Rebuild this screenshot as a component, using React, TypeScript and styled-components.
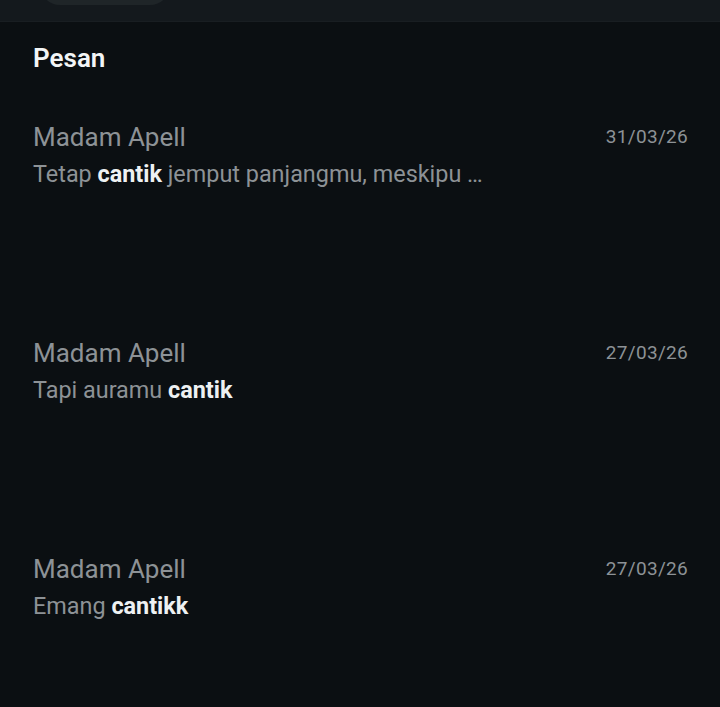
import React from 'react';
import styled, { createGlobalStyle } from 'styled-components';

const Global = createGlobalStyle`
  html, body {
    margin: 0;
    padding: 0;
    background: #0b0f12;
  }
  body {
    font-family: Roboto, "Noto Sans", "Liberation Sans", sans-serif;
  }
`;

const Screen = styled.div`
  width: 720px;
  height: 707px;
  overflow: hidden;
  background: #0b0f12;
  display: flex;
  flex-direction: column;
`;

const TopBar = styled.div`
  height: 21px;
  background: #14191d;
  border-bottom: 1px solid #191e22;
  display: flex;
  align-items: flex-end;
  padding-left: 40px;
  overflow: hidden;
  flex-shrink: 0;
`;

const SearchPill = styled.div`
  width: 130px;
  height: 40px;
  margin-bottom: 16px;
  border-radius: 20px;
  background: #1f2528;
`;

const Heading = styled.h2`
  margin: 0;
  padding: 21px 33px 0;
  font-size: 26px;
  line-height: 30px;
  font-weight: 600;
  color: #f3f5f6;
`;

const List = styled.div`
  display: flex;
  flex-direction: column;
  padding-top: 48px;
`;

const Row = styled.div`
  height: 216px;
  padding: 0 32px 0 33px;
  display: flex;
  flex-direction: column;
`;

const TopLine = styled.div`
  display: flex;
  justify-content: space-between;
  align-items: center;
`;

const Name = styled.span`
  font-size: 26px;
  line-height: 32px;
  color: #8d9296;
`;

const Date = styled.span`
  font-size: 19px;
  line-height: 24px;
  color: #8d9296;
  letter-spacing: 0.3px;
`;

const Message = styled.div`
  font-size: 23.4px;
  line-height: 38px;
  margin-top: 2px;
  color: #8d9296;
  white-space: nowrap;
`;

const Hit = styled.b`
  color: #eef1f2;
  font-weight: 700;
`;

const messages = [
  { date: '31/03/26', before: 'Tetap ', hit: 'cantik', after: ' jemput panjangmu, meskipu …' },
  { date: '27/03/26', before: 'Tapi auramu ', hit: 'cantik', after: '' },
  { date: '27/03/26', before: 'Emang ', hit: 'cantikk', after: '' },
];

export default function App() {
  return (
    <Screen>
      <Global />
      <TopBar>
        <SearchPill />
      </TopBar>
      <Heading>Pesan</Heading>
      <List>
        {messages.map((m, i) => (
          <Row key={i}>
            <TopLine>
              <Name>Madam Apell</Name>
              <Date>{m.date}</Date>
            </TopLine>
            <Message>
              {m.before}
              <Hit>{m.hit}</Hit>
              {m.after}
            </Message>
          </Row>
        ))}
      </List>
    </Screen>
  );
}
